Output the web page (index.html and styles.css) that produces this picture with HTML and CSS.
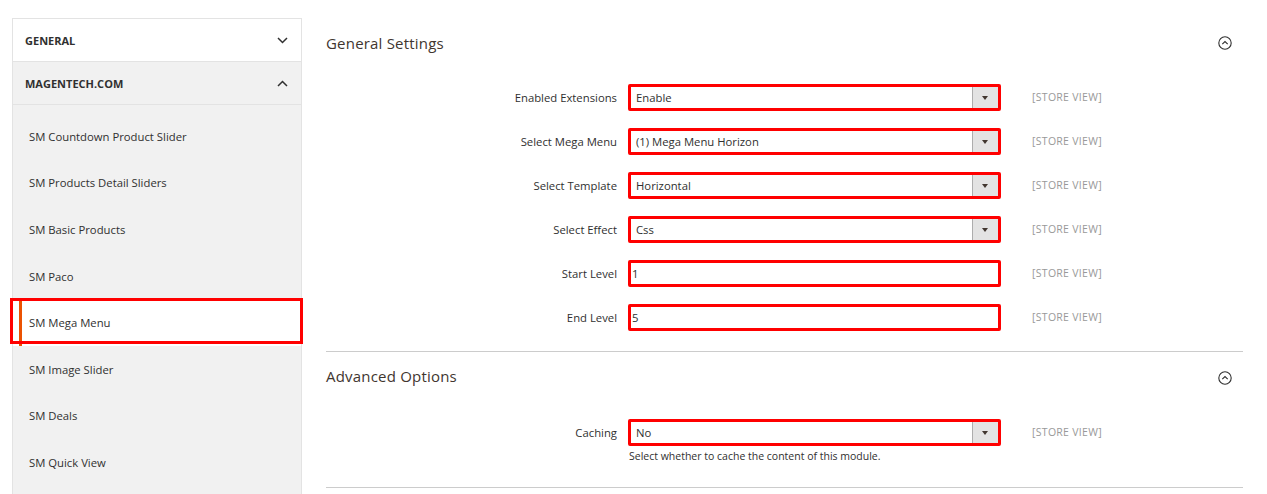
FILE: index.html
```html
<!DOCTYPE html>
<html>
<head>
<meta charset="utf-8">
<link rel="stylesheet" href="styles.css">
</head>
<body>
<div class="page">
  <aside class="sidebar">
    <div class="sb-head sb-general">
      <span>General</span>
      <svg class="chev" width="11" height="7" viewBox="0 0 11 7"><path d="M1 1l4.5 4.5L10 1" fill="none" stroke="#303030" stroke-width="1.5"/></svg>
    </div>
    <div class="sb-head sb-open">
      <span>Magentech.com</span>
      <svg class="chev" width="11" height="7" viewBox="0 0 11 7"><path d="M1 6l4.5-4.5L10 6" fill="none" stroke="#303030" stroke-width="1.5"/></svg>
    </div>
    <ul class="sb-list">
      <li class="sb-item">SM Countdown Product Slider</li>
      <li class="sb-item">SM Products Detail Sliders</li>
      <li class="sb-item">SM Basic Products</li>
      <li class="sb-item">SM Paco</li>
      <li class="sb-item active">SM Mega Menu</li>
      <li class="sb-item">SM Image Slider</li>
      <li class="sb-item">SM Deals</li>
      <li class="sb-item">SM Quick View</li>
    </ul>
  </aside>

  <main class="main">
    <section class="section">
      <div class="sec-head">
        <h2 class="sec-title">General Settings</h2>
        <svg class="collapse" width="14" height="14" viewBox="0 0 14 14"><circle cx="7" cy="7" r="6.2" fill="none" stroke="#303030" stroke-width="1.1"/><path d="M4.3 8.2L7 5.5l2.7 2.7" fill="none" stroke="#303030" stroke-width="1.1"/></svg>
      </div>
      <div class="fields">
        <div class="row">
          <label class="lbl">Enabled Extensions</label>
          <div class="ctrl select"><span class="val">Enable</span><span class="arrow"></span></div>
          <span class="scope">[STORE VIEW]</span>
        </div>
        <div class="row">
          <label class="lbl">Select Mega Menu</label>
          <div class="ctrl select"><span class="val">(1) Mega Menu Horizon</span><span class="arrow"></span></div>
          <span class="scope">[STORE VIEW]</span>
        </div>
        <div class="row">
          <label class="lbl">Select Template</label>
          <div class="ctrl select"><span class="val">Horizontal</span><span class="arrow"></span></div>
          <span class="scope">[STORE VIEW]</span>
        </div>
        <div class="row">
          <label class="lbl">Select Effect</label>
          <div class="ctrl select"><span class="val">Css</span><span class="arrow"></span></div>
          <span class="scope">[STORE VIEW]</span>
        </div>
        <div class="row">
          <label class="lbl">Start Level</label>
          <div class="ctrl input"><span class="val tight">1</span></div>
          <span class="scope">[STORE VIEW]</span>
        </div>
        <div class="row">
          <label class="lbl">End Level</label>
          <div class="ctrl input"><span class="val tight">5</span></div>
          <span class="scope">[STORE VIEW]</span>
        </div>
      </div>
    </section>

    <section class="section sec-adv">
      <div class="sec-head">
        <h2 class="sec-title">Advanced Options</h2>
        <svg class="collapse" width="14" height="14" viewBox="0 0 14 14"><circle cx="7" cy="7" r="6.2" fill="none" stroke="#303030" stroke-width="1.1"/><path d="M4.3 8.2L7 5.5l2.7 2.7" fill="none" stroke="#303030" stroke-width="1.1"/></svg>
      </div>
      <div class="fields">
        <div class="row">
          <label class="lbl">Caching</label>
          <div class="ctrl-wrap">
            <div class="ctrl select"><span class="val">No</span><span class="arrow"></span></div>
            <p class="note">Select whether to cache the content of this module.</p>
          </div>
          <span class="scope">[STORE VIEW]</span>
        </div>
      </div>
    </section>
  </main>
</div>
</body>
</html>
```

FILE: styles.css
```css
* { box-sizing: border-box; }
html, body { margin: 0; padding: 0; background: #fff; }
body {
  font-family: "Open Sans", "Liberation Sans", sans-serif;
  color: #303030;
  width: 1267px;
  height: 494px;
  overflow: hidden;
}
.page {
  display: flex;
  align-items: flex-start;
}

/* Sidebar */
.sidebar {
  margin: 18px 0 0 12px;
  width: 290px;
  flex: none;
  border: 1px solid #e3e3e3;
  border-bottom: none;
  background: #f1f1f1;
}
.sb-head {
  height: 43px;
  display: flex;
  align-items: center;
  justify-content: space-between;
  padding: 0 13px 0 12px;
  font-size: 11px;
  font-weight: 700;
  text-transform: uppercase;
  color: #303030;
  border-bottom: 1px solid #e3e3e3;
}
.sb-general { background: #fff; height: 43px; }
.sb-open { background: #f1f1f1; }
.chev { display: block; }
.sb-list {
  list-style: none;
  margin: 0;
  padding: 8px 0 40px;
}
.sb-item {
  height: 46.6px;
  display: flex;
  align-items: center;
  padding-left: 16px;
  font-size: 11.3px;
  color: #303030;
  position: relative;
}
.sb-item.active { background: #fff; }
.sb-item.active::before {
  content: "";
  position: absolute;
  left: 6px;
  top: 0;
  bottom: 0;
  width: 3px;
  background: #eb5202;
}
.sb-item.active::after {
  content: "";
  position: absolute;
  left: -3px;
  right: -2px;
  top: -1px;
  bottom: 2px;
  border: 3px solid #ff0000;
}

/* Main */
.main {
  flex: 1;
  margin: 18px 24px 0 24px;
}
.sec-head {
  height: 50px;
  display: flex;
  align-items: center;
  justify-content: space-between;
  padding-right: 11px;
}
.sec-title {
  margin: 0;
  font-size: 15px;
  font-weight: 400;
  color: #41362f;
  letter-spacing: 0.2px;
}
.collapse { display: block; }
.fields {
  padding: 16px 0 20px;
  display: flex;
  flex-direction: column;
  gap: 17px;
}
.section { border-bottom: 1px solid #cccccc; }
.sec-adv .sec-head { height: 51px; }
.sec-adv .sec-title { margin-bottom: 3px; }
.sec-adv .fields { padding-bottom: 23px; }
.row {
  display: grid;
  grid-template-columns: 291px 373px auto;
  column-gap: 11px;
  align-items: start;
}
.lbl {
  text-align: right;
  font-size: 11.3px;
  line-height: 27px;
  color: #303030;
}
.ctrl {
  height: 27px;
  border: 3px solid #ff0000;
  border-radius: 2px;
  display: flex;
  align-items: stretch;
  background: #fff;
}
.val {
  flex: 1;
  padding-left: 5px;
  font-size: 11.3px;
  line-height: 21px;
  color: #303030;
}
.val.tight { padding-left: 1px; }
.arrow {
  width: 26px;
  background: #e3e3e3;
  border-left: 1px solid #adadad;
  position: relative;
}
.arrow::after {
  content: "";
  position: absolute;
  left: 9px;
  top: 9px;
  border-left: 3.5px solid transparent;
  border-right: 3.5px solid transparent;
  border-top: 4px solid #41362f;
}
.scope {
  font-size: 10.5px;
  line-height: 27px;
  color: #999999;
  text-transform: uppercase;
  letter-spacing: 0.3px;
  padding-left: 20px;
}
.note {
  margin: 2px 0 0 1px;
  font-size: 10.5px;
  line-height: 16px;
  color: #303030;
}
```
